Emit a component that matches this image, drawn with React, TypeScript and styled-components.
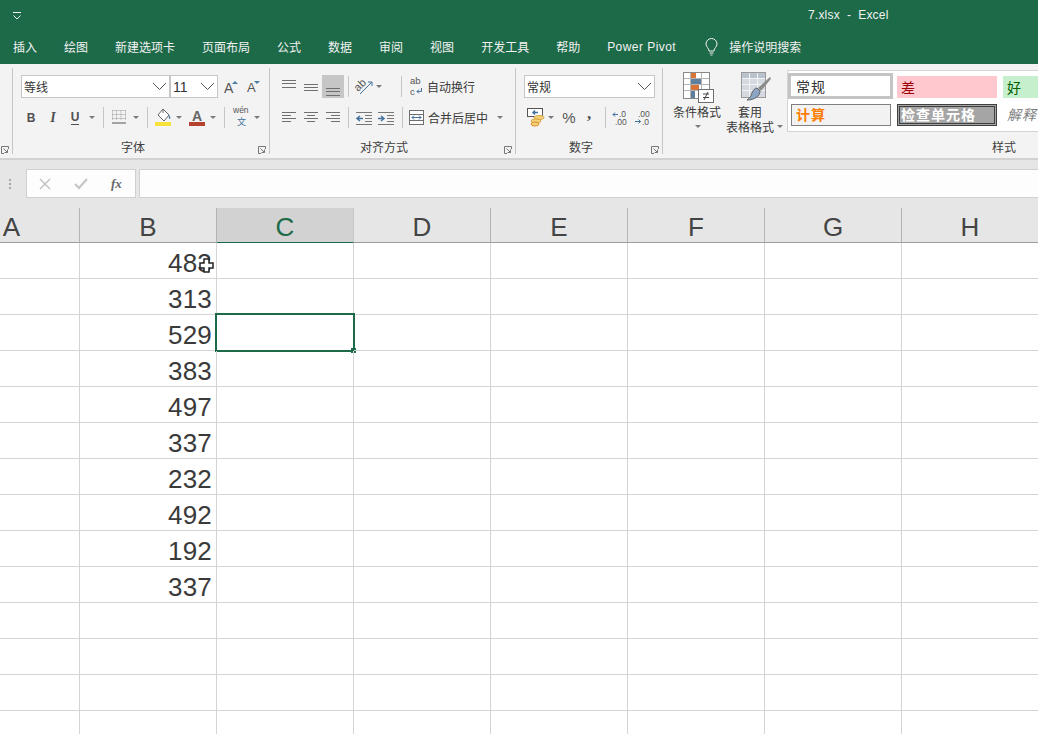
import React from "react";
import styled, { createGlobalStyle } from "styled-components";

const GREEN = "#1d6a49";
const CJK = `"Noto Sans CJK SC", "Liberation Sans", sans-serif`;

const Global = createGlobalStyle`
	html, body {
		margin: 0;
		padding: 0;
		background: #fff;
		overflow: hidden;
	}
	* {
		box-sizing: border-box;
	}
`;

const Window = styled.div`
	width: 1038px;
	height: 734px;
	overflow: hidden;
	display: flex;
	flex-direction: column;
	font-family: ${CJK};
	color: #404040;
`;

/* title + tabs */
const Head = styled.header`
	height: 64px;
	flex: none;
	background: ${GREEN};
	color: #f2f2f2;
	display: flex;
	flex-direction: column;
`;

const TitleRow = styled.div`
	height: 32px;
	display: flex;
	align-items: center;
	padding-left: 12px;
`;

const Title = styled.span`
	margin-left: 786px;
	margin-top: -3px;
	font-family: "Liberation Sans", sans-serif;
	font-size: 12px;
	white-space: pre;
	letter-spacing: 0.2px;
`;

const TabRow = styled.nav`
	height: 29px;
	display: flex;
	align-items: center;
	padding-left: 13px;
	gap: 27px;
	font-size: 12px;
`;

const Tab = styled.span`
	white-space: nowrap;
`;

const TabLatin = styled(Tab)`
	font-family: "Liberation Sans", sans-serif;
	letter-spacing: 0.45px;
`;

const Search = styled.span`
	display: flex;
	align-items: center;
	gap: 11px;
	margin-left: 2px;
`;

/* ribbon */
const Ribbon = styled.section`
	height: 96px;
	flex: none;
	background: #f3f3f3;
	border-bottom: 2px solid #d2d2d2;
	padding-top: 4px;
	display: flex;
`;

const Group = styled.div<{ $w: number }>`
	width: ${(p) => p.$w}px;
	flex: none;
	height: 86px;
	border-right: 1px solid #c6c6c6;
	padding-top: 7px;
	display: flex;
	flex-direction: column;
`;

const StyleGroup = styled(Group)`
	flex: 1;
	border-right: 0;
	padding-top: 2px;
	min-width: 0;
`;

const ToolRow = styled.div<{ $top?: number }>`
	height: 23px;
	flex: none;
	margin-top: ${(p) => p.$top ?? 0}px;
	display: flex;
	align-items: center;
`;

const Tool = styled.span<{ $w: number; $ml: number }>`
	width: ${(p) => p.$w}px;
	margin-left: ${(p) => p.$ml}px;
	flex: none;
	display: flex;
	align-items: center;
	justify-content: center;
`;

const ActiveTool = styled(Tool)`
	height: 23px;
	background: #c6c6c6;
`;

const FontLetter = styled(Tool)<{ $italic?: boolean }>`
	font-family: "Liberation Serif", serif;
	font-size: 14px;
	font-weight: 700;
	font-style: ${(p) => (p.$italic ? "italic" : "normal")};
	color: #505050;
`;

const Underlined = styled.span`
	border-bottom: 1px solid #505050;
	font-family: "Liberation Sans", sans-serif;
	font-size: 12px;
	line-height: 13px;
`;

const BoldLetter = styled(FontLetter)`
	font-family: "Liberation Sans", sans-serif;
	font-size: 12px;
`;

const SizeLetter = styled(Tool)<{ $size: number }>`
	position: relative;
	justify-content: flex-start;
	padding-top: 3px;
	font-family: "Liberation Sans", sans-serif;
	font-size: ${(p) => p.$size}px;
	line-height: 16px;
	color: #555;
`;

const SizePeak = styled.i<{ $down?: boolean }>`
	position: absolute;
	right: 0;
	top: 4px;
	width: 0;
	height: 0;
	border-left: 3px solid transparent;
	border-right: 3px solid transparent;
	border-${(p) => (p.$down ? "top" : "bottom")}: 3px solid #4a7ca8;
`;

const Caret = styled.i<{ $ml: number }>`
	flex: none;
	width: 0;
	height: 0;
	margin-left: ${(p) => p.$ml}px;
	border-left: 3px solid transparent;
	border-right: 3px solid transparent;
	border-top: 3px solid #7a7a7a;
`;

const RowDivider = styled.i<{ $ml: number }>`
	flex: none;
	width: 1px;
	height: 21px;
	margin-left: ${(p) => p.$ml}px;
	background: #c6c6c6;
`;

const Select = styled.div<{ $w: number; $ml: number }>`
	width: ${(p) => p.$w}px;
	height: 23px;
	flex: none;
	margin-left: ${(p) => p.$ml}px;
	padding: 0 2px 0 2px;
	background: #fff;
	border: 1px solid #c6c6c6;
	display: flex;
	align-items: center;
	justify-content: space-between;
	font-size: 12px;
	color: #333;
`;

const SelectNumber = styled.span`
	font-family: "Liberation Sans", sans-serif;
	font-size: 14px;
`;

const ToolText = styled.span<{ $ml: number }>`
	flex: none;
	margin-left: ${(p) => p.$ml}px;
	font-size: 12px;
	color: #3a3a3a;
	white-space: nowrap;
`;

const Percent = styled(Tool)`
	font-family: "Liberation Sans", sans-serif;
	font-size: 15px;
	color: #555;
`;

const Comma = styled(Tool)`
	font-family: "Liberation Serif", serif;
	font-weight: 700;
	font-size: 17px;
	line-height: 14px;
	color: #555;
	padding-bottom: 7px;
`;

const LabelRow = styled.div`
	margin-top: auto;
	height: 20px;
	display: flex;
	align-items: center;
`;

const GroupLabel = styled.span<{ $ml: number }>`
	margin-left: ${(p) => p.$ml}px;
	font-size: 12px;
	color: #404040;
	margin-top: 4px;
`;

const Launcher = styled.span<{ $mr: number }>`
	margin-left: auto;
	margin-right: ${(p) => p.$mr}px;
	margin-top: 11px;
	display: flex;
`;

const StyleTop = styled.div`
	display: flex;
	height: 64px;
`;

const BigButton = styled.div<{ $ml: number }>`
	width: 48px;
	margin-left: ${(p) => p.$ml}px;
	flex: none;
	display: flex;
	flex-direction: column;
	align-items: center;
	font-size: 12px;
	line-height: 15px;
	color: #3a3a3a;
	white-space: nowrap;
`;

const BigIcon = styled.span<{ $shift: number }>`
	height: 31px;
	margin: 2px 0 1px ${(p) => p.$shift}px;
	display: flex;
`;

const BigLine = styled.span`
	min-height: 15px;
	width: 48px;
	display: flex;
	align-items: center;
	justify-content: center;
	gap: 3px;
`;

const TrailingCaret = styled(Caret)`
	margin-right: -9px;
`;

const Gallery = styled.div`
	margin-left: 13px;
	flex: 1;
	height: 62px;
	background: #fff;
	border: 1px solid #d4d4d4;
	border-right: 0;
	padding: 2px 0 0 0;
	display: grid;
	grid-template-columns: 105px 100px 1fr;
	grid-template-rows: 26px 22px;
	column-gap: 4px;
	row-gap: 5px;
	overflow: hidden;
`;

const StyleCell = styled.div`
	font-size: 14px;
	letter-spacing: 1px;
	display: flex;
	align-items: center;
	padding-left: 4px;
	white-space: nowrap;
	overflow: hidden;
`;

const NormalCell = styled(StyleCell)`
	background: #fff;
	border: 3px solid #c4c4c4;
	color: #333;
	padding-left: 5px;
`;

const BadCell = styled(StyleCell)`
	margin-top: 3px;
	height: 22px;
	background: #ffc7ce;
	color: #9c0006;
`;

const GoodCell = styled(StyleCell)`
	margin-top: 3px;
	height: 22px;
	margin-left: 2px;
	background: #c6efce;
	color: #006100;
`;

const CalcCell = styled(StyleCell)`
	margin-left: 3px;
	width: 100px;
	background: #f2f2f2;
	border: 1px solid #7f7f7f;
	color: #fa7d00;
	font-weight: 700;
	padding-bottom: 3px;
`;

const CheckCell = styled(StyleCell)`
	background: #a5a5a5;
	border: 3px double #3f3f3f;
	color: #fff;
	font-weight: 700;
	padding: 0 0 3px 1px;
`;

const NoteCell = styled(StyleCell)`
	margin-left: 2px;
	color: #7f7f7f;
	font-style: italic;
	padding-bottom: 3px;
`;

/* formula bar */
const FormulaBar = styled.div`
	height: 48px;
	flex: none;
	background: #e6e6e6;
	display: flex;
	align-items: center;
	padding: 0 0 1px 9px;
`;

const Grip = styled.span`
	width: 3px;
	display: flex;
	flex-direction: column;
	gap: 2px;
	i {
		width: 2px;
		height: 2px;
		background: #a8a8a8;
	}
`;

const NameBox = styled.div`
	margin-left: 14px;
	width: 110px;
	height: 29px;
	background: #fdfdfd;
	border: 1px solid #d0d0d0;
	display: flex;
	align-items: center;
	padding-left: 12px;
	gap: 23px;
`;

const Fx = styled.span`
	font-family: "Liberation Serif", serif;
	font-style: italic;
	font-weight: 700;
	font-size: 13px;
	color: #666;
`;

const FormulaInput = styled.div`
	margin-left: 3px;
	flex: 1;
	height: 29px;
	background: #fdfdfd;
	border: 1px solid #d0d0d0;
	border-right: 0;
`;

/* sheet */
const Sheet = styled.div`
	flex: 1;
	display: grid;
	grid-template-columns: 80px repeat(7, 137px);
	grid-template-rows: 35px;
	grid-auto-rows: 36px;
	align-content: start;
	background: #fff;
	font-family: "Liberation Sans", sans-serif;
`;

const ColHead = styled.div<{ $active?: boolean; $first?: boolean }>`
	height: 35px;
	background: ${(p) => (p.$active ? "#d2d2d2" : "#e6e6e6")};
	color: ${(p) => (p.$active ? GREEN : "#444")};
	border-right: 1px solid ${(p) => (p.$active ? "#c6c6c6" : "#b4b4b4")};
	border-bottom: 1px solid ${(p) => (p.$active ? GREEN : "#9c9c9c")};
	font-size: 26px;
	line-height: 39px;
	text-align: ${(p) => (p.$first ? "right" : "center")};
	padding-right: ${(p) => (p.$first ? 59 : 0)}px;
	overflow: hidden;
`;

const Cell = styled.div`
	position: relative;
	border-right: 1px solid #d4d4d4;
	border-bottom: 1px solid #d4d4d4;
	font-size: 26px;
	line-height: 40px;
	letter-spacing: 0.2px;
	text-align: right;
	padding-right: 4px;
	color: #3a3a3a;
`;

const Selection = styled.span`
	position: absolute;
	left: -2px;
	top: -2px;
	width: 140px;
	height: 39px;
	border: 2px solid ${GREEN};
`;

const Handle = styled.span`
	position: absolute;
	right: -3px;
	bottom: -3px;
	width: 5px;
	height: 5px;
	background: ${GREEN};
`;

const CursorMark = styled.svg`
	position: absolute;
	left: 119px;
	top: 15px;
`;

/* drawings */
const Glyph: React.FC<{ w: number; h: number; children: React.ReactNode }> = ({ w, h, children }) => (
	<svg width={w} height={h} viewBox={`0 0 ${w} ${h}`} fill="none" style={{ display: "block", overflow: "visible" }}>
		{children}
	</svg>
);

const Chevron = () => (
	<Glyph w={15} h={9}>
		<path d="M1 1l6.500 6.500L14 1" stroke="#555" />
	</Glyph>
);

const LauncherIcon = () => (
	<Glyph w={8} h={8}>
		<path d="M7.500 3V.5H.5v7H3M2.500 2.500l4 4M3.500 6.500h3v-3" stroke="#777" />
	</Glyph>
);

const Lines: React.FC<{ rows: [number, number, number][]; h?: number; w?: number }> = ({ rows, h = 20, w = 14 }) => (
	<Glyph w={w} h={h}>
		{rows.map(([x1, x2, y]) => (
			<path key={`${x1}${y}`} d={`M${x1} ${y + 0.5}H${x2}`} stroke="#6f6f6f" />
		))}
	</Glyph>
);

const BorderIcon = () => (
	<Glyph w={14} h={15}>
		<path d="M.5.5h13M.5 4.500h13M.5 8.500h13M.5.5v10M4.500.5v10M9 .5v10M13.500.5v10" stroke="#9a9a9a" strokeDasharray="1 1" />
		<path d="M0 13h14" stroke="#555" />
	</Glyph>
);

const FillIcon = () => (
	<Glyph w={17} h={19}>
		<path d="M8 1l6 6-5 6-6-6z" fill="#fff" stroke="#666" />
		<path d="M8 1V5" stroke="#666" />
		<path d="M14 7c1 1.500 2 3 1 4-1.500-.5-1.500-2.500-1-4z" fill="#41719c" />
		<rect y="14" width="16" height="4" fill="#f6e23a" />
	</Glyph>
);

const ColorIcon = () => (
	<Glyph w={17} h={19}>
		<text x="3" y="13" fontFamily="Liberation Sans" fontWeight="700" fontSize="14" fill="#666">
			A
		</text>
		<rect y="14" width="16" height="4" fill="#b5432f" />
	</Glyph>
);

const WenIcon = () => (
	<Glyph w={17} h={21}>
		<text x="0" y="6" fontFamily="Liberation Sans" fontSize="8.500" fill="#555">
			wén
		</text>
		<text x="4" y="18" fontFamily="Noto Sans CJK SC" fontSize="9" fill="#41719c">
			文
		</text>
	</Glyph>
);

const OrientIcon = () => (
	<Glyph w={17} h={17}>
		<g transform="rotate(-45 7 9)">
			<text x="0" y="9" fontFamily="Liberation Sans" fontSize="11" fill="#555">
				ab
			</text>
		</g>
		<path d="M4 16L16 4M12 4h4v4" stroke="#41719c" />
	</Glyph>
);

const WrapIcon = () => (
	<Glyph w={13} h={19}>
		<text x="0" y="7" fontFamily="Liberation Sans" fontSize="9.500" fill="#555">
			ab
		</text>
		<text x="0" y="17.700" fontFamily="Liberation Sans" fontSize="9.500" fill="#555">
			c
		</text>
		<path d="M11.500 11v3.500H7M9 12.500l-2 2 2 2" stroke="#41719c" />
	</Glyph>
);

const MergeIcon = () => (
	<Glyph w={15} h={15}>
		<rect x=".5" y=".5" width="14" height="14" fill="#fff" stroke="#6f6f6f" />
		<path d="M.5 4.500h14M.5 10.500h14" stroke="#6f6f6f" />
		<path d="M3 7.500h9M5 5.500l-2 2 2 2M10 5.500l2 2-2 2" stroke="#41719c" />
	</Glyph>
);

const IndentIcon: React.FC<{ out?: boolean }> = ({ out }) => (
	<Glyph w={16} h={14}>
		<path d="M0 1.500h16M9 4.500h7M9 7.500h7M9 10.500h7M0 13.500h16" stroke="#777" />
		<path d={out ? "M1 7.500h6M4 5l-3 2.500L4 10" : "M0 7.500h6M3 5l3 2.500L3 10"} stroke="#41719c" strokeWidth="1.500" />
	</Glyph>
);

const MoneyIcon = () => (
	<Glyph w={18} h={19}>
		<rect x=".5" y=".5" width="15" height="8" fill="#fff" stroke="#555" />
		<path d="M6 4.500h5M8 2.500l-2 2 2 2" stroke="#41719c" strokeWidth="1.500" />
		<ellipse cx="12" cy="9.500" rx="5" ry="2" fill="#f3d27a" stroke="#d9a441" />
		<ellipse cx="9" cy="13" rx="5" ry="2" fill="#f3d27a" stroke="#d9a441" />
		<ellipse cx="8" cy="16" rx="4" ry="2" fill="#f3d27a" stroke="#e08a2e" />
	</Glyph>
);

const DecimalIcon: React.FC<{ more?: boolean }> = ({ more }) => (
	<Glyph w={16} h={16}>
		<text x={more ? 4 : 7} y="7" fontFamily="Liberation Sans" fontSize="8.500" fill="#555">
			{more ? ".00" : ".0"}
		</text>
		<text x={more ? 8 : 3} y="15" fontFamily="Liberation Sans" fontSize="8.500" fill="#555">
			{more ? ".0" : ".00"}
		</text>
		<path d={more ? "M1 11.500h6M4.500 9.500l2 2-2 2" : "M1 4.500h5M3 2.500l-2 2 2 2"} stroke="#41719c" />
	</Glyph>
);

const CondIcon = () => (
	<Glyph w={31} h={31}>
		<rect x=".5" y=".5" width="26" height="26" fill="#fff" stroke="#8a8a8a" />
		<path d="M7.500 1v25M18.500 1v25M1 6.500h25M1 12.500h25M1 18.500h25" stroke="#b4b4b4" />
		<rect x="8" y="1" width="5" height="5" fill="#d8743a" />
		<rect x="8" y="7" width="10" height="5" fill="#5f7f9f" />
		<rect x="8" y="13" width="8" height="5" fill="#d8743a" />
		<rect x="8" y="19" width="4" height="7" fill="#5f7f9f" />
		<rect x="15.500" y="17.500" width="15" height="13" fill="#fff" stroke="#6f6f6f" />
		<path d="M20 22h6M20 25.500h6M25 20l-4 8" stroke="#444" />
	</Glyph>
);

const TableIcon = () => (
	<Glyph w={30} h={31}>
		<rect x=".5" y=".5" width="24" height="25" fill="#d5dae2" stroke="#9a9a9a" />
		<rect x="1" y="1" width="23" height="5" fill="#b9c2cf" />
		<path d="M8.500 1v24M16.500 1v24M1 6.500h23M1 12.500h23M1 18.500h23" stroke="#f3f3f3" />
		<path d="M29 5c1 1 1 2 0 3L20 19l-3-3z" fill="#8c8c8c" />
		<path d="M16 16l3 3c0 5-5 9-13 9 3-2 4-4 5-7 1-3 3-5 5-5z" fill="#8aa6c4" stroke="#666" />
	</Glyph>
);

const Bulb = () => (
	<Glyph w={13} h={18}>
		<path d="M4 13c0-3-3-4-3-7a5.500 5.500 0 0 1 11 0c0 3-3 4-3 7z" stroke="#f2f2f2" />
		<path d="M4.500 15h4M5.500 17h2" stroke="#f2f2f2" />
	</Glyph>
);

const QatMark = () => (
	<Glyph w={10} h={8}>
		<path d="M1 .5h8M1.500 3.500L5 7l3.500-3.500" stroke="#f2f2f2" />
	</Glyph>
);

const tabs = ["插入", "绘图", "新建选项卡", "页面布局", "公式", "数据", "审阅", "视图", "开发工具", "帮助"];
const columns = ["A", "B", "C", "D", "E", "F", "G", "H"];
const values = [483, 313, 529, 383, 497, 337, 232, 492, 192, 337, "", "", "", ""];

const App: React.FunctionComponent = () => {
	return (
		<Window>
			<Global />
			<Head>
				<TitleRow>
					<QatMark />
					<Title>7.xlsx  -  Excel</Title>
				</TitleRow>
				<TabRow>
					{tabs.map((t) => (
						<Tab key={t}>{t}</Tab>
					))}
					<TabLatin>Power Pivot</TabLatin>
					<Search>
						<Bulb />
						<Tab>操作说明搜索</Tab>
					</Search>
				</TabRow>
			</Head>
			<Ribbon>
				<Group $w={13}>
					<LabelRow>
						<Launcher $mr={3}>
							<LauncherIcon />
						</Launcher>
					</LabelRow>
				</Group>
				<Group $w={257}>
					<ToolRow>
						<Select $w={149} $ml={8}>
							等线
							<Chevron />
						</Select>
						<Select $w={48} $ml={0}>
							<SelectNumber>11</SelectNumber>
							<Chevron />
						</Select>
						<SizeLetter $w={14} $ml={6} $size={14}>
							A
							<SizePeak />
						</SizeLetter>
						<SizeLetter $w={13} $ml={9} $size={13}>
							A
							<SizePeak $down />
						</SizeLetter>
					</ToolRow>
					<ToolRow $top={8}>
						<BoldLetter $w={14} $ml={11}>
							B
						</BoldLetter>
						<FontLetter $w={14} $ml={8} $italic>
							I
						</FontLetter>
						<FontLetter $w={14} $ml={8}>
							<Underlined>U</Underlined>
						</FontLetter>
						<Caret $ml={7} />
						<RowDivider $ml={8} />
						<Tool $w={14} $ml={8}>
							<BorderIcon />
						</Tool>
						<Caret $ml={7} />
						<RowDivider $ml={8} />
						<Tool $w={17} $ml={7}>
							<FillIcon />
						</Tool>
						<Caret $ml={4} />
						<Tool $w={17} $ml={7}>
							<ColorIcon />
						</Tool>
						<Caret $ml={4} />
						<RowDivider $ml={8} />
						<Tool $w={17} $ml={8}>
							<WenIcon />
						</Tool>
						<Caret $ml={4} />
					</ToolRow>
					<LabelRow>
						<GroupLabel $ml={108}>字体</GroupLabel>
						<Launcher $mr={3}>
							<LauncherIcon />
						</Launcher>
					</LabelRow>
				</Group>
				<Group $w={246}>
					<ToolRow>
						<Tool $w={14} $ml={12}>
							<Lines rows={[[0, 14, 3], [0, 14, 6], [0, 14, 10]]} />
						</Tool>
						<Tool $w={14} $ml={8}>
							<Lines rows={[[0, 14, 7], [0, 14, 10], [0, 14, 13]]} />
						</Tool>
						<ActiveTool $w={22} $ml={4}>
							<Lines rows={[[0, 14, 11], [0, 14, 14], [0, 14, 18]]} />
						</ActiveTool>
						<RowDivider $ml={4} />
						<Tool $w={17} $ml={7}>
							<OrientIcon />
						</Tool>
						<Caret $ml={3} />
						<RowDivider $ml={19} />
						<Tool $w={13} $ml={8}>
							<WrapIcon />
						</Tool>
						<ToolText $ml={4}>自动换行</ToolText>
					</ToolRow>
					<ToolRow $top={8}>
						<Tool $w={14} $ml={12}>
							<Lines rows={[[0, 14, 4], [0, 9, 7], [0, 14, 10], [0, 9, 13]]} />
						</Tool>
						<Tool $w={14} $ml={8}>
							<Lines rows={[[0, 14, 4], [3, 11, 7], [0, 14, 10], [3, 11, 13]]} />
						</Tool>
						<Tool $w={14} $ml={8}>
							<Lines rows={[[0, 14, 4], [5, 14, 7], [0, 14, 10], [5, 14, 13]]} />
						</Tool>
						<RowDivider $ml={8} />
						<Tool $w={16} $ml={7}>
							<IndentIcon out />
						</Tool>
						<Tool $w={16} $ml={6}>
							<IndentIcon />
						</Tool>
						<RowDivider $ml={8} />
						<Tool $w={15} $ml={6}>
							<MergeIcon />
						</Tool>
						<ToolText $ml={4}>合并后居中</ToolText>
						<Caret $ml={9} />
					</ToolRow>
					<LabelRow>
						<GroupLabel $ml={90}>对齐方式</GroupLabel>
						<Launcher $mr={3}>
							<LauncherIcon />
						</Launcher>
					</LabelRow>
				</Group>
				<Group $w={147}>
					<ToolRow>
						<Select $w={131} $ml={8}>
							常规
							<Chevron />
						</Select>
					</ToolRow>
					<ToolRow $top={8}>
						<Tool $w={18} $ml={11}>
							<MoneyIcon />
						</Tool>
						<Caret $ml={3} />
						<Percent $w={18} $ml={6}>
							%
						</Percent>
						<Comma $w={8} $ml={7}>
							,
						</Comma>
						<RowDivider $ml={12} />
						<Tool $w={16} $ml={6}>
							<DecimalIcon />
						</Tool>
						<Tool $w={16} $ml={6}>
							<DecimalIcon more />
						</Tool>
					</ToolRow>
					<LabelRow>
						<GroupLabel $ml={53}>数字</GroupLabel>
						<Launcher $mr={3}>
							<LauncherIcon />
						</Launcher>
					</LabelRow>
				</Group>
				<StyleGroup $w={375}>
					<StyleTop>
						<BigButton $ml={10}>
							<BigIcon $shift={2}>
								<CondIcon />
							</BigIcon>
							<span>条件格式</span>
							<BigLine>
								<Caret $ml={2} />
							</BigLine>
						</BigButton>
						<BigButton $ml={5}>
							<BigIcon $shift={11}>
								<TableIcon />
							</BigIcon>
							<span>套用</span>
							<BigLine>
								表格格式
								<TrailingCaret $ml={0} />
							</BigLine>
						</BigButton>
						<Gallery>
							<NormalCell>常规</NormalCell>
							<BadCell>差</BadCell>
							<GoodCell>好</GoodCell>
							<CalcCell>计算</CalcCell>
							<CheckCell>检查单元格</CheckCell>
							<NoteCell>解释</NoteCell>
						</Gallery>
					</StyleTop>
					<LabelRow>
						<GroupLabel $ml={329}>样式</GroupLabel>
					</LabelRow>
				</StyleGroup>
			</Ribbon>
			<FormulaBar>
				<Grip>
					<i />
					<i />
					<i />
				</Grip>
				<NameBox>
					<Glyph w={12} h={12}>
						<path d="M1 1l10 10M11 1L1 11" stroke="#c4c4c4" strokeWidth="1.500" />
					</Glyph>
					<Glyph w={14} h={12}>
						<path d="M1 6l4 4 8-9" stroke="#c4c4c4" strokeWidth="2" />
					</Glyph>
					<Fx>fx</Fx>
				</NameBox>
				<FormulaInput />
			</FormulaBar>
			<Sheet>
				{columns.map((c, i) => (
					<ColHead key={c} $active={c === "C"} $first={i === 0}>
						{c}
					</ColHead>
				))}
				{values.map((v, row) =>
					columns.map((c) => (
						<Cell key={`${c}${row}`}>
							{c === "B" ? v : ""}
							{c === "B" && row === 0 && (
								<CursorMark width="15" height="15" viewBox="0 0 15 15">
									<path
										d="M5 1h5v4h4v5h-4v4H5v-4H1V5h4z"
										fill="#fff"
										stroke="#222"
										strokeWidth="1.500"
									/>
								</CursorMark>
							)}
							{c === "C" && row === 2 && (
								<Selection>
									<Handle />
								</Selection>
							)}
						</Cell>
					))
				)}
			</Sheet>
		</Window>
	);
};

export default App;
